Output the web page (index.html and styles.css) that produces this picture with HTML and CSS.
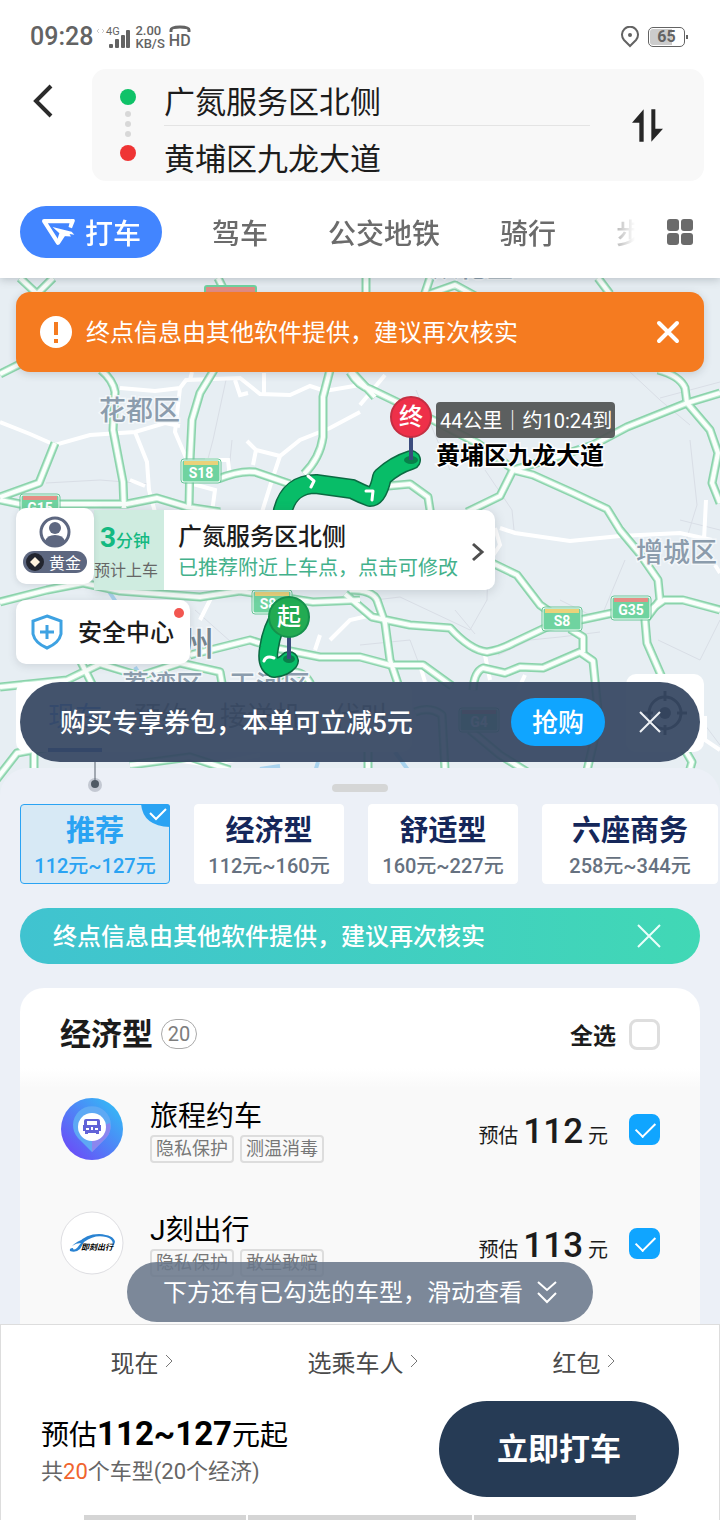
FILE: index.html
```
<!DOCTYPE html>
<html lang="zh-CN">
<head>
    <meta charset="UTF-8">
    <meta name="viewport" content="width=device-width, initial-scale=1.0">
    <title>打车</title>
    <link rel="stylesheet" href="styles.css">
</head>
<body>
    <header class="header">
        <div class="status-bar">
            <span class="status-time">09:28</span>
            <svg class="status-signal" viewBox="0 0 34 24" width="34" height="24">
                <path d="M2 4l-2 2 2 2M5 4l2 2-2 2" fill="none" stroke="#ccc"/>
                <text x="9" y="10" class="signal-label">4G</text>
                <g fill="#636363"><rect x="12" y="19" width="4" height="4" rx="1"/><rect x="18" y="14" width="4" height="9" rx="1"/><rect x="24" y="10" width="4" height="13" rx="1"/><rect x="29" y="5" width="4" height="18" rx="1"/></g>
            </svg>
            <span class="status-speed">2.00<br>KB/S</span>
            <span class="status-hd">
                <svg viewBox="0 0 22 8" width="22" height="8"><path d="M2 7V5Q2 2 11 2T20 5V7" fill="none" stroke="#636363" stroke-width="3"/></svg>
                HD
            </span>
            <svg class="status-pin" viewBox="0 0 20 22" width="20" height="22">
                <path d="M10 20L4 14A8 8 0 1 1 16 14Z" fill="none" stroke="#636363" stroke-width="2"/>
                <circle cx="10" cy="9" r="2" fill="#636363"/>
            </svg>
            <span class="battery">65</span>
        </div>

        <div class="route-row">
            <button class="back" aria-label="返回">
                <svg viewBox="0 0 22 34" width="22" height="34"><path d="M19 2L4 17l15 15" fill="none" stroke="#2b2b2b" stroke-width="4"/></svg>
            </button>
            <div class="route-box">
                <svg class="route-dots" viewBox="0 0 16 72" width="16" height="72">
                    <circle cx="8" cy="8" r="8" fill="#0fc268"/>
                    <g fill="#d8d8d8"><circle cx="8" cy="25" r="3"/><circle cx="8" cy="35" r="3"/><circle cx="8" cy="45" r="3"/></g>
                    <circle cx="8" cy="64" r="8" fill="#ef3434"/>
                </svg>
                <div class="route-fields">
                    <input type="text" aria-label="起点" value="广氮服务区北侧">
                    <input type="text" aria-label="终点" value="黄埔区九龙大道">
                </div>
                <button class="swap" aria-label="交换起终点">
                    <svg viewBox="0 0 93 97" width="31" height="33" fill="#262626"><path d="M0 40L35 0V97H22V40Z"/><path d="M58 0H70V58H93L58 97Z"/></svg>
                </button>
            </div>
        </div>

        <nav class="modes">
            <div class="mode-list">
                <button class="mode mode-active">
                    <svg viewBox="0 0 100 82" width="34" height="28">
                        <path d="M88 9H9L50 73 66 49" fill="none" stroke="#fff" stroke-width="12" stroke-linejoin="round"/>
                        <path d="M88 3h8q5 1 3 7l-8 20-10-4 3-12zM34 26l56 14 8 9-14-2 4 7-24-1-13 20-5-4 8-24z" fill="#fff"/>
                    </svg>
                    打车
                </button>
                <button class="mode">驾车</button>
                <button class="mode">公交地铁</button>
                <button class="mode">骑行</button>
                <button class="mode">步行</button>
            </div>
            <button class="more" aria-label="更多">
                <svg viewBox="0 0 26 26" width="26" height="26" fill="#6b6b6b"><rect width="12" height="12" rx="3"/><rect x="14" width="12" height="12" rx="3"/><rect y="14" width="12" height="12" rx="3"/><rect x="14" y="14" width="12" height="12" rx="3"/></svg>
            </button>
        </nav>
    </header>

    <section class="map">
        <svg class="map-canvas" viewBox="0 278 720 522" preserveAspectRatio="xMidYMin slice">
            <defs>
                <g id="highways">
                    <path d="M20 278L37 294 53 278M218 278L226 294M366 278V292M430 278L424 296 455 285 475 296M598 278L610 294"/>
                    <path d="M0 374L24 362M101 370Q113 380 115 392L113 430 123 482 124 508"/>
                    <path d="M214 370L200 393 192 420 190 460 189 508M55 443L39 483 0 497M0 500L20 504H127L157 498 187 507 220 512"/>
                    <path d="M218 479Q240 470 255 472L290 484M330 370L323 397V437Q320 458 304 474M352 372L375 397"/>
                    <path d="M350 372Q358 386 370 389L397 402 433 420 477 443 513 469M720 393L687 403 627 427 593 445 547 460 513 470 500 496 467 512"/>
                    <path d="M513 470L533 475 573 493 607 509 620 530 640 554 658 580 660 600 645 620 647 643 664 682"/>
                    <path d="M658 370Q680 376 685 388L687 403 710 430 718 453 712 483 720 503M388 486L410 484 428 497 431 516"/>
                    <path d="M0 602L47 590 83 583 120 591 200 597 240 591 313 602 360 600M490 562L517 575 540 605 560 619"/>
                    <path d="M350 590Q372 590 377 600L385 623 390 660 400 690M345 594L372 617 410 625 450 628Q470 650 487 652 500 650 513 643L547 627 613 613 650 610 664 600H683L720 610"/>
                    <path d="M190 655L250 640 275 648 320 657 360 657 390 665H423L452 686M473 690Q474 672 483 668L505 673 520 667 543 668 580 652 593 661 599 720 580 800"/>
                    <path d="M570 629L583 637V652M0 687L67 680 100 664 140 676 180 663 220 672 225 700M80 660L95 690"/>
                    <path d="M-4 780L17 753 60 745M34 745V800M130 765L190 757 230 770M368 770V752M445 770L442 715Q430 706 415 712M470 730L500 755 540 780M682 745L692 762 684 790M248 700Q300 650 313 690"/>
                </g>
                <g id="shield"><rect width="38" height="22" rx="2" fill="#6fd3a0" stroke="#fff" stroke-width="1"/><rect x="-1" y="-1" width="40" height="24" rx="3" fill="none" stroke="#6bc698"/></g>
            </defs>
            <rect y="278" width="720" height="522" fill="#e7eef3"/>
            <g class="boundary">
                <path d="M226 380L213 440 205 470M232 440L228 480M46 483L100 480 150 484M630 372L660 400 690 425M660 398L720 382M690 440L697 505 680 560M485 470L512 510 514 530M375 600L400 597 470 630 487 600 488 560M560 600L600 620 625 560M658 640L700 660 720 620M498 655L530 640 560 637 600 632"/>
                <path d="M360 645L410 640 425 680M195 610L240 650M680 520L720 530M455 610L475 634M705 725L720 745M416 390L450 470"/>
            </g>
            <g class="minor">
                <path d="M120 388L155 391 180 388 186 380 240 378 260 394 290 395 310 386 325 391 360 385M264 373V393M235 380L240 395 248 393M180 388L175 432 187 460M192 372L190 380"/>
                <path d="M0 422L30 434 55 445 90 435 135 432 165 423 180 426M135 432L147 462 149 490 155 512M247 441L256 450 280 456 300 440 330 428 360 412M280 456L272 480 262 512M256 450L253 465M130 480L145 486"/>
                <path d="M205 460L228 460 230 478M193 484L215 490 212 512M360 405L385 375M500 528L515 533 570 541 620 536 680 533 712 540M706 500L704 540M715 565L720 573M495 528L500 545 490 560"/>
                <path d="M330 640L350 620 385 612M315 650L320 635M485 655L490 680M525 675L518 690M420 665L425 682M215 590L200 620M125 510V560M160 758L210 765 260 755M705 716V740L720 750"/>
            </g>
            <g class="water"><path d="M108 590L116 602M135 667L150 690M395 752L408 770M318 762L314 775M280 766L260 769"/></g>
            <use href="#highways" class="hwy-edge"/>
            <use href="#highways" class="hwy-soft"/>
            <use href="#highways" class="hwy-core"/>

            <g class="place">
                <text x="99" y="420">花都区</text>
                <text x="636" y="562">增城区</text>
                <text x="432" y="277">从化区</text>
                <text x="122" y="695">荔湾区</text>
                <text x="229" y="695">天河区</text>
                <text x="146" y="656" class="place-city">广州</text>
            </g>

            <g class="shield-label">
                <g transform="translate(182 460)"><use href="#shield"/><rect x="2" y="1" width="34" height="4" fill="#ead27a"/><text x="19" y="18">S18</text></g>
                <g transform="translate(21 495)"><use href="#shield"/><rect x="2" y="1" width="34" height="4" fill="#e58d85"/><text x="19" y="18">G15</text></g>
                <g transform="translate(543 608)"><use href="#shield"/><rect x="2" y="1" width="34" height="4" fill="#ead27a"/><text x="19" y="18">S8</text></g>
                <g transform="translate(612 597)"><use href="#shield"/><rect x="2" y="1" width="34" height="4" fill="#e58d85"/><text x="19" y="18">G35</text></g>
                <g transform="translate(253 591)"><use href="#shield"/><rect x="2" y="1" width="34" height="4" fill="#ead27a"/><text x="19" y="18">S81</text></g>
                <g transform="translate(460 709)"><use href="#shield"/><rect x="2" y="1" width="34" height="4" fill="#e58d85"/><text x="19" y="18">G4</text></g>
                <rect x="205" y="286" width="51" height="30" rx="2" fill="#e58d85" stroke="#6fd3a0" stroke-width="2"/>
            </g>

            <g fill="none" stroke-linecap="round" stroke-linejoin="round">
                <path d="M411 460Q395 465 382 477 378 497 370 497 362 494 352 489 330 486 316 484 290 484 283 510L280 525M281 616Q272 628 269 648 266 664 274 668 284 667 289 661" stroke="#0b6a42" stroke-width="20"/>
                <path d="M411 460Q395 465 382 477 378 497 370 497 362 494 352 489 330 486 316 484 290 484 283 510L280 525M281 616Q272 628 269 648 266 664 274 668 284 667 289 661" stroke="#08bd68" stroke-width="17"/>
                <path d="M308 476L314 481 311 487M366 491L373 491 372 500M264 661Q266 655 274 658" stroke="#fff" stroke-width="3"/>
            </g>
            <ellipse cx="411" cy="460" rx="7" ry="4" fill="#08804a"/>
            <ellipse cx="289" cy="659" rx="6" ry="4" fill="#08804a"/>
            <path d="M411 436V460M289 636V659" stroke="#3b4c7d" stroke-width="4"/>
            <g class="pin-label">
                <circle cx="411" cy="417" r="20" fill="#ee3049" stroke="#c42f42" stroke-width="2"/>
                <text x="411" y="425">终</text>
                <circle cx="289" cy="617" r="20" fill="#22ab52" stroke="#15914c" stroke-width="2"/>
                <text x="289" y="625">起</text>
            </g>
            <rect x="436" y="402" width="179" height="36" rx="4" fill="#505352" fill-opacity=".92"/>
            <text x="440" y="428" class="eta-tag">44公里｜约10:24到</text>
            <text x="436" y="464" class="dest-label">黄埔区九龙大道</text>
        </svg>

        <div class="alert">
            <svg viewBox="0 0 32 32" width="32" height="32"><circle cx="16" cy="16" r="16" fill="#fff"/><path d="M16 6v13M16 23v4" stroke="#f57b20" stroke-width="4"/></svg>
            <span>终点信息由其他软件提供，建议再次核实</span>
            <button class="close" aria-label="关闭">
                <svg viewBox="0 0 24 24" width="24" height="24"><path d="M3 3l18 18M21 3L3 21" stroke="#fff" stroke-width="4" stroke-linecap="round"/></svg>
            </button>
        </div>

        <div class="pickup-row">
            <a class="member" href="#member">
                <svg viewBox="0 0 32 32" width="32" height="32">
                    <circle cx="16" cy="16" r="14" fill="none" stroke="#5d6780" stroke-width="3"/>
                    <circle cx="16" cy="12" r="6" fill="#5d6780"/><path d="M6 25Q8 19 16 19T26 25Q16 34 6 25Z" fill="#5d6780"/>
                </svg>
                <span class="level">
                    <svg viewBox="0 0 18 18" width="18" height="18"><circle cx="9" cy="9" r="9" fill="#22252f"/><path d="M9 4l5 5-5 5-5-5z" fill="#fff3df"/></svg>
                    黄金
                </span>
            </a>
            <a class="pickup" href="#pickup">
                <span class="wait"><span class="wait-time"><b>3</b>分钟</span><small>预计上车</small></span>
                <span class="pickup-text">
                    <strong>广氮服务区北侧</strong>
                    <span>已推荐附近上车点，点击可修改</span>
                </span>
                <svg viewBox="0 0 14 20" width="14" height="20"><path d="M2 2l9 8-9 8" fill="none" stroke="#4e4e4e" stroke-width="3"/></svg>
            </a>
        </div>

        <button class="safety">
            <svg viewBox="0 0 32 36" width="32" height="36" fill="none" stroke="#3ea2e2" stroke-width="3"><path d="M16 2L30 7V20Q28 29 16 34 4 29 2 20V7Z"/><path d="M16 11v14M9 18h14"/></svg>
            <span>安全中心</span>
        </button>

        <div class="promo-area">
            <div class="when">
                <span class="when-active">现在</span><span>预约</span><span>接送机</span><span>代叫</span>
            </div>
            <button class="locate" aria-label="定位">
                <svg viewBox="0 0 44 44" width="44" height="44"><circle cx="22" cy="22" r="16" fill="none" stroke="#333" stroke-width="3"/><circle cx="22" cy="22" r="6" fill="#333"/><path d="M22 0v10M22 34v10M0 22h10M34 22h10" stroke="#333" stroke-width="3"/></svg>
            </button>
            <div class="promo">
                <span>购买专享券包，本单可立减5元</span>
                <button class="buy">抢购</button>
                <button class="close" aria-label="关闭">
                    <svg viewBox="0 0 22 22" width="22" height="22"><path d="M1 1l20 20M21 1L1 21" stroke="#eef1f5" stroke-width="2"/></svg>
                </button>
            </div>
            <svg class="promo-tail" viewBox="0 0 14 30" width="14" height="30"><circle cx="7" cy="23" r="7" fill="#c3c8d2"/><path d="M7 0v22" stroke="#56606c"/><circle cx="7" cy="22" r="4" fill="#4f5964"/></svg>
        </div>
    </section>

    <main class="sheet">
        <div class="handle"></div>
        <div class="types">
            <button class="type type-active">
                <strong>推荐</strong>112元~127元
                <svg viewBox="0 0 29 23" width="29" height="23"><path d="M0 0H26Q29 0 29 3V23Q2 22 0 0Z" fill="#2aa3f3"/><path d="M9 9l6 6L25 5" fill="none" stroke="#fff" stroke-width="2"/></svg>
            </button>
            <button class="type"><strong>经济型</strong>112元~160元</button>
            <button class="type"><strong>舒适型</strong>160元~227元</button>
            <button class="type type-wide"><strong>六座商务</strong>258元~344元</button>
        </div>
        <div class="notice">
            <span>终点信息由其他软件提供，建议再次核实</span>
            <button class="close" aria-label="关闭">
                <svg viewBox="0 0 24 24" width="24" height="24"><path d="M1 1l22 22M23 1L1 23" stroke="#eafffb" stroke-width="2"/></svg>
            </button>
        </div>

        <section class="cars">
            <div class="cars-head">
                <h2>经济型</h2>
                <span class="count">20</span>
                <label class="select-all">全选 <input type="checkbox"></label>
            </div>
            <label class="car">
                <svg class="car-logo" viewBox="0 0 64 64" width="64" height="64">
                    <defs><linearGradient id="logo-bg" x1="1" y1="0" x2="0" y2="1"><stop offset=".15" stop-color="#38b2f6"/><stop offset=".9" stop-color="#6b4cf7"/></linearGradient></defs>
                    <circle cx="32" cy="32" r="31" fill="url(#logo-bg)"/>
                    <path d="M32 55L18 41A19 19 0 1 1 46 41Z" fill="#5ea9f4"/>
                    <path d="M32 55V32L50 26Q52 35 46 41Z" fill="#8b86ef"/>
                    <circle cx="32" cy="30" r="14" fill="#fff"/>
                    <path d="M26 22h12q2 0 2 2v4h1v6h-2v3h-3v-1h-8v1h-3v-3h-2v-6h1v-4q0-2 2-2z" fill="#6263d8"/>
                    <path d="M27 24h10v4H27zM26 31h3v2h-3zM31 30h2v3h-2zM35 31h3v2h-3z" fill="#fff"/>
                </svg>
                <span class="car-info">
                    <span class="car-name">旅程约车</span>
                    <span class="tags"><i>隐私保护</i><i>测温消毒</i></span>
                </span>
                <span class="price">预估 <b>112</b> 元</span>
                <input type="checkbox" checked>
            </label>
            <label class="car">
                <svg class="car-logo" viewBox="0 0 64 64" width="64" height="64">
                    <circle cx="32" cy="32" r="31" fill="#fff" stroke="#dedee2"/>
                    <path d="M18 32Q26 23 39 23 54 24 55 31 54 35 51 37 56 29 46 26 35 23 24 31L20 38Q16 42 10 40 9 37 13 37 13 40 17 37L21 32Q16 32 12 35 17 30 24 28 20 31 18 32Z" fill="#2a83d2"/>
                    <text x="21" y="39" class="logo-text">即刻出行</text>
                </svg>
                <span class="car-info">
                    <span class="car-name">J刻出行</span>
                    <span class="tags"><i>隐私保护</i><i>敢坐敢赔</i></span>
                </span>
                <span class="price">预估 <b>113</b> 元</span>
                <input type="checkbox" checked>
            </label>
            <button class="scroll-tip">
                <span>下方还有已勾选的车型，滑动查看</span>
                <svg viewBox="0 0 20 24" width="20" height="24" fill="none" stroke="#fff" stroke-width="2"><path d="M1 2l9 8 9-8M1 13l9 9 9-9"/></svg>
            </button>
        </section>
    </main>

    <footer class="order">
        <div class="options">
            <button>现在<svg viewBox="0 0 8 14" width="8" height="14"><path d="M1 1l6 6-6 6"/></svg></button>
            <button>选乘车人<svg viewBox="0 0 8 14" width="8" height="14"><path d="M1 1l6 6-6 6"/></svg></button>
            <button>红包<svg viewBox="0 0 8 14" width="8" height="14"><path d="M1 1l6 6-6 6"/></svg></button>
        </div>
        <div class="submit-row">
            <div>
                <p class="total">预估<b>112~127</b>元起</p>
                <p class="summary">共<em>20</em>个车型(20个经济)</p>
            </div>
            <button class="submit">立即打车</button>
        </div>
        <div class="nav-hints"><span></span><span></span><span></span></div>
    </footer>
</body>
</html>
```
FILE: styles.css
```
* {
    box-sizing: border-box;
}
body {
    margin: 0;
    min-height: 100vh;
    display: flex;
    flex-direction: column;
    background: #fff;
    color: #1c1c1c;
    font-family: Roboto, "Noto Sans CJK SC", sans-serif;
    overflow-x: hidden;
}
button, input {
    font: inherit;
    color: inherit;
    border: none;
    background: none;
    padding: 0;
    margin: 0;
}
a {
    color: inherit;
    text-decoration: none;
}
svg {
    display: block;
    flex: none;
}
p, h2 {
    margin: 0;
}

/* header */
.header {
    padding: 20px 16px;
    position: relative;
    z-index: 1;
    box-shadow: 0 2px 8px rgba(60, 70, 80, 0.25);
    background: #fff;
}
.status-bar {
    display: flex;
    align-items: center;
    height: 34px;
    padding: 0 19px 0 14px;
    color: #636363;
}
.status-time {
    font-size: 25px;
    line-height: 34px;
    font-weight: 500;
}
.status-signal {
    margin-left: 4px;
}
.signal-label {
    font-size: 11px;
    fill: #636363;
}
.status-speed {
    margin-left: 4px;
    font-size: 13px;
    line-height: 13px;
    font-weight: 500;
}
.status-hd {
    margin-left: 4px;
    font-size: 16px;
    line-height: 16px;
    font-weight: 500;
}
.status-pin {
    margin-left: auto;
}
.battery {
    position: relative;
    width: 37px;
    margin-left: 8px;
    border: 1px solid #636363;
    border-radius: 5px;
    background: linear-gradient(90deg, #ccc 65%, #fff 65%);
    background-clip: content-box;
    padding: 1px;
    text-align: center;
    font-size: 16px;
    line-height: 16px;
    font-weight: 700;
}
.battery::after {
    content: "";
    position: absolute;
    right: -4px;
    top: 7px;
    width: 2px;
    height: 4px;
    background: #636363;
}
.route-row {
    display: flex;
    margin-top: 15px;
}
.back {
    width: 76px;
    height: 64px;
    padding-left: 16px;
}
.route-box {
    flex: 1;
    display: flex;
    align-items: center;
    background: #f8f8f8;
    border-radius: 14px;
    padding-left: 28px;
    height: 112px;
}
.route-fields {
    flex: 1;
    margin-left: 28px;
}
.route-fields input {
    display: block;
    width: 100%;
    height: 56px;
    padding-top: 5px;
    font-size: 31px;
}
.route-fields input + input {
    border-top: 1px solid #e4e4e4;
}
.swap {
    width: 114px;
    display: flex;
    justify-content: center;
}
.modes {
    display: flex;
    align-items: center;
    margin-top: 25px;
    padding: 0 11px 0 4px;
}
.mode-list {
    flex: 1;
    display: flex;
    overflow: hidden;
    margin-right: 32px;
    -webkit-mask-image: linear-gradient(270deg, transparent, #000 40px);
    mask-image: linear-gradient(270deg, transparent, #000 40px);
}
.mode {
    flex: none;
    margin-left: 60px;
    height: 52px;
    font-size: 28px;
    font-weight: 500;
    color: #6b6b6b;
}
.mode-active {
    display: flex;
    align-items: center;
    justify-content: center;
    gap: 10px;
    width: 142px;
    margin-left: 0;
    border-radius: 26px;
    background: #4285ff;
    color: #fff;
}
.mode-active + .mode {
    margin-left: 50px;
}

/* map */
.map {
    position: relative;
    padding: 14px 16px 6px;
}
.map-canvas {
    position: absolute;
    left: 0;
    top: 0;
    width: 100%;
    height: calc(100% + 32px);
}
.hwy-edge, .hwy-soft, .hwy-core {
    fill: none;
    stroke-linejoin: round;
}
.hwy-edge {
    stroke: #8bd3ab;
    stroke-width: 9px;
}
.hwy-soft {
    stroke: #bcebd1;
    stroke-width: 6px;
}
.hwy-core {
    stroke: #fbfffc;
    stroke-width: 4px;
}
.minor {
    fill: none;
    stroke: #fff;
    stroke-width: 4px;
}
.boundary {
    fill: none;
    stroke: #d9dee6;
    stroke-width: 1px;
}
.water {
    stroke: #a9d3ee;
    stroke-width: 4px;
}
.place {
    font-size: 27px;
    font-weight: 500;
    fill: #8b9cac;
    stroke: #f3f7fa;
    stroke-width: 3px;
    paint-order: stroke;
}
.place-city {
    font-size: 34px;
    fill: #75858f;
}
.shield-label {
    font-size: 14px;
    font-weight: 700;
    fill: #fff;
    text-anchor: middle;
}
.pin-label {
    font-size: 24px;
    font-weight: 500;
    fill: #fff;
    text-anchor: middle;
}
.eta-tag {
    font-size: 20px;
    fill: #fff;
}
.dest-label {
    font-size: 24px;
    font-weight: 700;
    fill: #000;
    stroke: #fff;
    stroke-width: 3px;
    paint-order: stroke;
}
.alert {
    position: relative;
    display: flex;
    align-items: center;
    gap: 14px;
    height: 80px;
    padding: 0 24px;
    border-radius: 14px;
    background: #f57b20;
    box-shadow: 0 2px 8px rgba(60, 70, 80, 0.2);
    color: #fff;
    font-size: 24px;
}
.alert span, .safety span, .promo span, .notice span, .scroll-tip span {
    padding-bottom: 4px;
}
.close {
    margin-left: auto;
}
.pickup-row {
    position: relative;
    display: flex;
    margin-top: 136px;
    height: 82px;
}
.member {
    z-index: 1;
    width: 78px;
    height: 76px;
    display: flex;
    flex-direction: column;
    align-items: center;
    gap: 3px;
    padding-top: 8px;
    border-radius: 10px;
    background: #fff;
    box-shadow: 0 1px 6px rgba(60, 70, 80, 0.15);
}
.level {
    display: flex;
    align-items: center;
    gap: 5px;
    height: 22px;
    padding: 0 6px 0 3px;
    border-radius: 11px;
    background: #5d6780;
    color: #fff;
    font-size: 16px;
}
.pickup {
    display: flex;
    align-items: center;
    width: 401px;
    height: 80px;
    margin-top: 2px;
    padding: 3px 10px 0 0;
    border-radius: 0 10px 10px 0;
    background: linear-gradient(90deg, #cfece0 70px, #fff 70px);
    box-shadow: 0 2px 12px rgba(60, 70, 80, 0.2);
}
.wait {
    width: 84px;
}
.wait-time {
    display: block;
    padding-left: 6px;
    color: #14b981;
    font-size: 17px;
    line-height: 36px;
    font-weight: 500;
}
.wait-time b {
    font-size: 28px;
}
.wait small {
    display: block;
    font-size: 16px;
    line-height: 24px;
    color: #666;
}
.pickup-text {
    flex: 1;
    white-space: nowrap;
    font-size: 20px;
    line-height: 30px;
    color: #43b18b;
}
.pickup-text strong {
    display: block;
    font-size: 24px;
    line-height: 32px;
    font-weight: 500;
    color: #1c1c1c;
}
.safety {
    position: relative;
    display: flex;
    align-items: center;
    gap: 15px;
    width: 174px;
    height: 64px;
    margin-top: 10px;
    padding-left: 15px;
    border-radius: 10px;
    background: #fff;
    box-shadow: 0 2px 8px rgba(60, 70, 80, 0.15);
    font-size: 24px;
    font-weight: 500;
}
.safety::after {
    content: "";
    position: absolute;
    top: 8px;
    right: 6px;
    width: 10px;
    height: 10px;
    border-radius: 50%;
    background: #f25650;
}
.promo-area {
    position: relative;
    margin-top: 18px;
    padding: 0 4px;
    z-index: 2;
}
/* cards that lie under the translucent promo bar */
.when {
    position: absolute;
    left: 0;
    top: 0;
    display: flex;
    gap: 32px;
    width: 396px;
    height: 70px;
    padding: 0 32px;
    border-radius: 10px;
    background: #fff;
    color: #777;
    font-size: 27px;
    line-height: 70px;
    white-space: nowrap;
}
.when-active {
    color: #4285ff;
    border-bottom: 4px solid #2a5cc8;
}
.locate {
    position: absolute;
    right: 0;
    top: -8px;
    width: 78px;
    height: 78px;
    padding-left: 17px;
    border-radius: 10px;
    background: #fff;
}
.promo {
    position: relative;
    display: flex;
    align-items: center;
    height: 80px;
    padding: 0 39px 0 40px;
    border-radius: 40px;
    background: rgba(53, 70, 97, 0.93);
    color: #fff;
    font-size: 26px;
    font-weight: 500;
}
.buy {
    width: 94px;
    height: 48px;
    margin-left: auto;
    padding-bottom: 4px;
    border-radius: 24px;
    background: #10a5ff;
}
.promo .close {
    margin-left: 34px;
}
.promo-tail {
    position: absolute;
    left: 72px;
    top: 80px;
}

/* bottom sheet */
.sheet {
    position: relative;
    z-index: 1;
    flex: 1;
    padding: 16px 20px 0;
    border-radius: 28px 28px 0 0;
    background: #ecf0f7;
    overflow: hidden;
}
.handle {
    width: 56px;
    height: 8px;
    margin: 0 auto 12px;
    border-radius: 4px;
    background: #d5d6d6;
}
.types {
    display: flex;
    gap: 24px;
    margin-right: -20px;
}
.type {
    position: relative;
    flex: none;
    width: 150px;
    height: 80px;
    padding-top: 5px;
    border: 1px solid #fff;
    border-radius: 4px;
    background: #fff;
    color: #667180;
    font-size: 20px;
    line-height: 32px;
    font-weight: 500;
}
.type strong {
    display: block;
    font-size: 29px;
    line-height: 38px;
    font-weight: 700;
    color: #15275a;
}
.type-wide {
    width: 176px;
}
.type-active {
    border-color: #2aa3f3;
    background: #d7e9f5;
    color: #2aa3f3;
}
.type-active strong {
    color: #2aa3f3;
}
.type svg {
    position: absolute;
    top: -1px;
    right: -1px;
}
.notice {
    display: flex;
    align-items: center;
    height: 56px;
    margin-top: 24px;
    padding: 0 39px 0 33px;
    border-radius: 28px;
    background: linear-gradient(90deg, #40c3d0, #41d8b5);
    color: #fff;
    font-size: 24px;
    font-weight: 500;
}
.cars {
    position: relative;
    margin-top: 24px;
    padding-bottom: 24px;
    border-radius: 24px 24px 0 0;
    background: linear-gradient(#fff 80px, #f9f9f9 100px);
}
.cars-head {
    display: flex;
    align-items: center;
    height: 84px;
    padding: 8px 40px 0;
}
.cars h2 {
    padding-bottom: 5px;
    font-size: 31px;
    font-weight: 700;
}
.count {
    width: 36px;
    height: 30px;
    margin-left: 8px;
    border: 1px solid #aaa;
    border-radius: 15px;
    color: #7d7d7d;
    font-size: 20px;
    line-height: 29px;
    text-align: center;
}
.select-all {
    display: flex;
    align-items: center;
    gap: 13px;
    margin-left: auto;
    font-size: 23px;
    font-weight: 700;
}
input[type="checkbox"] {
    appearance: none;
    position: relative;
    flex: none;
    width: 31px;
    height: 31px;
    border: 3px solid #dedede;
    border-radius: 8px;
    background: #fff;
}
input[type="checkbox"]:checked {
    border-color: #10a5ff;
    background: #10a5ff;
}
input[type="checkbox"]:checked::after {
    content: "";
    position: absolute;
    left: 4px;
    top: 5px;
    width: 17px;
    height: 9px;
    border: solid #fff;
    border-width: 0 0 2px 2px;
    transform: rotate(-45deg);
}
.car {
    display: flex;
    align-items: center;
    height: 114px;
    padding: 0 40px;
}
.logo-text {
    font-size: 8px;
    font-weight: 700;
    font-style: italic;
}
.car-info {
    margin-left: 26px;
    padding-top: 4px;
}
.car-name {
    display: block;
    font-size: 28px;
    line-height: 36px;
    color: #000;
}
.tags {
    display: flex;
    gap: 6px;
}
.tags i {
    height: 28px;
    padding: 0 4px;
    border: 2px solid #ddd;
    border-radius: 4px;
    color: #777;
    font-size: 18px;
    line-height: 24px;
    font-style: normal;
}
.price {
    margin-left: auto;
    margin-right: 21px;
    padding-top: 10px;
    font-size: 20px;
    line-height: 44px;
}
.price b, .total b {
    font-size: 35px;
    font-weight: 500;
}
.scroll-tip {
    position: absolute;
    left: 50%;
    bottom: 2px;
    transform: translateX(-50%);
    display: flex;
    align-items: center;
    justify-content: center;
    gap: 14px;
    width: 466px;
    height: 60px;
    border-radius: 30px;
    background: rgba(106, 120, 139, 0.88);
    color: #fff;
    font-size: 24px;
    white-space: nowrap;
}

/* order bar */
.order {
    position: relative;
    z-index: 2;
    padding: 0 40px;
    border: 1px solid #ddd;
    border-bottom: none;
    background: #fff;
}
.options {
    display: grid;
    grid-template-columns: repeat(3, 1fr);
    margin: 0 -15px 0 -10px;
    height: 76px;
    padding-bottom: 4px;
    color: #4a4a4a;
    font-size: 24px;
}
.options button {
    display: flex;
    align-items: center;
    justify-content: center;
    gap: 6px;
}
.options path {
    fill: none;
    stroke: #777;
}
.submit-row {
    display: flex;
    align-items: center;
    justify-content: space-between;
    height: 96px;
}
.total {
    padding-top: 4px;
    font-size: 28px;
    line-height: 40px;
    color: #000;
}
.total b {
    font-size: 33px;
    font-weight: 700;
}
.summary {
    font-size: 22px;
    line-height: 32px;
    color: #666;
}
.summary em {
    color: #f0642e;
    font-style: normal;
}
.submit {
    width: 240px;
    height: 96px;
    padding-bottom: 5px;
    border-radius: 48px;
    background: #263b55;
    color: #fff;
    font-size: 31px;
    font-weight: 700;
}
.nav-hints {
    display: flex;
    gap: 2px;
    margin: 18px 43px 0;
    height: 5px;
}
.nav-hints span {
    flex: 162;
    background: #d5d5d5;
}
.nav-hints span:nth-child(2) {
    flex: 224;
}
```
